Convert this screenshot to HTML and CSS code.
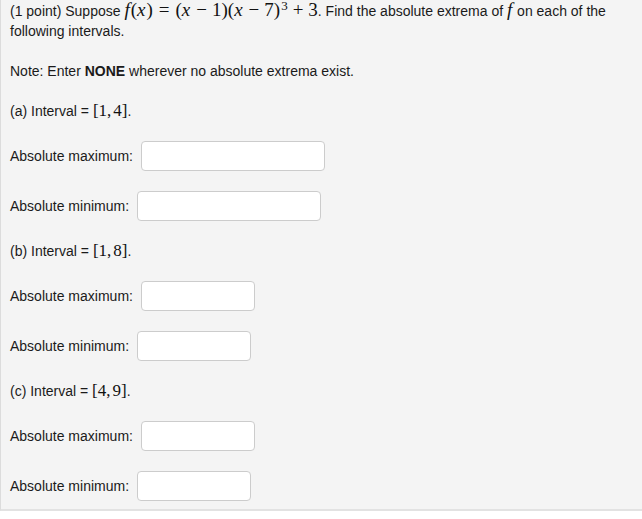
FILE: index.html
```html
<!DOCTYPE html>
<html>
<head>
<meta charset="utf-8">
<link rel="stylesheet" href="styles.css">
</head>
<body>
<div class="problem">
  <p class="block">(1 point) Suppose <span class="math"><i>f</i>(<i>x</i>)<span class="rel">=</span>(<i>x</i><span class="bin">−</span>1)(<i>x</i><span class="bin">−</span>7)<sup>3</sup><span class="bin">+</span>3</span>. Find the absolute extrema of <span class="math"><i>f</i></span> on each of the following intervals.</p>
  <p class="block">Note: Enter <b>NONE</b> wherever no absolute extrema exist.</p>

  <p class="block">(a) Interval = <span class="math ivl">[1,<span class="sp"></span>4]</span>.</p>
  <div class="row">Absolute maximum: <input class="ans wide" type="text"></div>
  <div class="row">Absolute minimum: <input class="ans wide" type="text"></div>

  <p class="block">(b) Interval = <span class="math ivl">[1,<span class="sp"></span>8]</span>.</p>
  <div class="row">Absolute maximum: <input class="ans" type="text"></div>
  <div class="row">Absolute minimum: <input class="ans" type="text"></div>

  <p class="block">(c) Interval = <span class="math ivl">[4,<span class="sp"></span>9]</span>.</p>
  <div class="row">Absolute maximum: <input class="ans" type="text"></div>
  <div class="row">Absolute minimum: <input class="ans" type="text"></div>
</div>
</body>
</html>
```
FILE: styles.css
```css
html, body {
  margin: 0;
  padding: 0;
  background: #ffffff;
}
.problem {
  box-sizing: border-box;
  height: 511px;
  background: #f4f4f4;
  border-left: 1px solid #dcdcdc;
  border-bottom: 2px solid #e2e2e2;
  padding: 1px 10px 0 9px;
  font-family: "Liberation Sans", Arial, sans-serif;
  font-size: 14px;
  line-height: 20px;
  color: #1a1a1a;
}
.block {
  margin: 0 0 20px 0;
}
.math {
  font-family: "Liberation Serif", "DejaVu Serif", serif;
  font-size: 19px;
  line-height: 14px;
  color: #111;
}
.math i {
  font-style: italic;
  padding-right: 1px;
}
.rel {
  margin: 0 6px;
}
.bin {
  margin: 0 5px;
}
.sp {
  display: inline-block;
  width: 2px;
}
.ivl {
  font-size: 17px;
}
.math sup {
  font-size: 13px;
  line-height: 0;
  vertical-align: 6px;
  margin-left: 1px;
}
.row {
  height: 30px;
  line-height: 30px;
  margin-bottom: 20px;
  display: flex;
  align-items: center;
  white-space: pre;
}
.ans {
  box-sizing: border-box;
  height: 30px;
  width: 114px;
  margin: 0 0 0 4px;
  padding: 4px 6px;
  border: 1px solid #cccccc;
  border-radius: 4px;
  background: #ffffff;
  font-family: "Liberation Sans", Arial, sans-serif;
  font-size: 14px;
}
.ans.wide {
  width: 184px;
}
```
